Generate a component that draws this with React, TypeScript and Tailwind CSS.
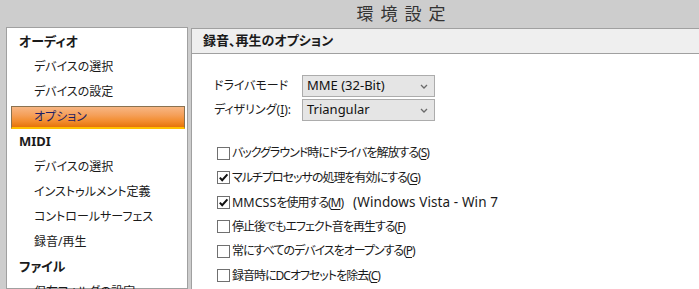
import React from "react";

function Check({ checked }: { checked?: boolean }) {
  return (
    <span className="w-[13px] h-[13px] shrink-0 border border-[#707070] bg-white flex items-center justify-center">
      {checked && (
        <svg width="11" height="11" viewBox="0 0 11 11">
          <path d="M1.8 5.6 L4.2 8.2 L9.4 2.4" stroke="#111" strokeWidth="2" fill="none" />
        </svg>
      )}
    </span>
  );
}

function Select({ value }: { value: string }) {
  return (
    <div className="w-[133px] h-[22px] border border-[#acacac] bg-[#e5e5e5] flex items-center pl-[4px] pr-[6px] text-[13px] text-[#111] font-['Noto_Sans',sans-serif]">
      <span className="flex-1">{value}</span>
      <svg width="8" height="5" viewBox="0 0 8 5">
        <path d="M1 1 L4 4 L7 1" stroke="#6a6a6a" strokeWidth="1.3" fill="none" />
      </svg>
    </div>
  );
}

const U = ({ c }: { c: string }) => <span className="underline underline-offset-[2px]">{c}</span>;

function Row({ checked, children }: { checked?: boolean; children: React.ReactNode }) {
  return (
    <div className="h-[24.5px] shrink-0 flex items-center gap-[2px] whitespace-nowrap">
      <Check checked={checked} />
      <span className="text-[12px] tracking-[-1px] leading-none">{children}</span>
    </div>
  );
}

export default function App() {
  const head = "h-[25px] shrink-0 flex items-center pl-[12px] font-bold text-[13px]";
  const item = "h-[25px] shrink-0 flex items-center pl-[27px] text-[12px]";
  return (
    <div className="w-[699px] h-[289px] overflow-hidden bg-[#cdcdcd] flex flex-col font-['Noto_Sans','Noto_Sans_CJK_JP',sans-serif] [font-feature-settings:'palt'] text-[#1a1a1a]">
      <div className="h-[27px] shrink-0 flex items-center justify-center pl-[110px] text-[17px] tracking-[7px] text-[#333]">
        環境設定
      </div>
      <div className="flex flex-1 min-h-0 pl-[6px] gap-[3px]">
        <div className="w-[182px] shrink-0 border border-[#a0a0a0] bg-white pt-[1px] flex flex-col">
          <div className={head}>オーディオ</div>
          <div className={item}>デバイスの選択</div>
          <div className={item}>デバイスの設定</div>
          <div className="h-[25px] shrink-0 pt-[2px] pl-[4px] pr-[2px]">
            <div className="h-[23px] flex items-center pl-[22px] text-[12px] text-[#1e1e66] border border-[#8a7250] border-b-[#ffc000] border-b-2 bg-[linear-gradient(to_bottom,#f7b684_0%,#f5a05a_40%,#f28c2c_72%,#e6730a_100%)]">
              オプション
            </div>
          </div>
          <div className={head}>MIDI</div>
          <div className={item}>デバイスの選択</div>
          <div className={item}>インストゥルメント定義</div>
          <div className={item}>コントロールサーフェス</div>
          <div className={item}>録音/再生</div>
          <div className={head}>ファイル</div>
          <div className={item}>保存フォルダの設定</div>
        </div>
        <div className="flex-1 mt-[1px] border-l border-t border-[#a0a0a0] bg-white flex flex-col">
          <div className="h-[25px] shrink-0 bg-[#efefef] border-b border-[#a0a0a0] pl-[11px] flex items-center font-bold text-[13px]">
            録音、再生のオプション
          </div>
          <div className="pt-[21px] pl-[22px] flex flex-col gap-[2px] shrink-0">
            <div className="flex items-center">
              <span className="w-[88px] text-[12px]">ドライバモード</span>
              <Select value="MME (32-Bit)" />
            </div>
            <div className="flex items-center">
              <span className="w-[88px] text-[12px]">
                ディザリング(<U c="I" />):
              </span>
              <Select value="Triangular" />
            </div>
          </div>
          <div className="pt-[20px] pl-[25px] flex flex-col shrink-0">
            <Row>
              バックグラウンド時にドライバを解放する(<U c="S" />)
            </Row>
            <Row checked>
              マルチプロセッサの処理を有効にする(<U c="G" />)
            </Row>
            <Row checked>
              <span className="text-[12.5px] tracking-normal">MMCSS</span>を使用する(<U c="M" />)
              <span className="ml-[10px] text-[13.5px] tracking-[0.1px]">(Windows Vista - Win 7</span>
            </Row>
            <Row>
              停止後でもエフェクト音を再生する(<U c="F" />)
            </Row>
            <Row>
              常にすべてのデバイスをオープンする(<U c="P" />)
            </Row>
            <Row>
              録音時にDCオフセットを除去(<U c="C" />)
            </Row>
          </div>
        </div>
      </div>
    </div>
  );
}
